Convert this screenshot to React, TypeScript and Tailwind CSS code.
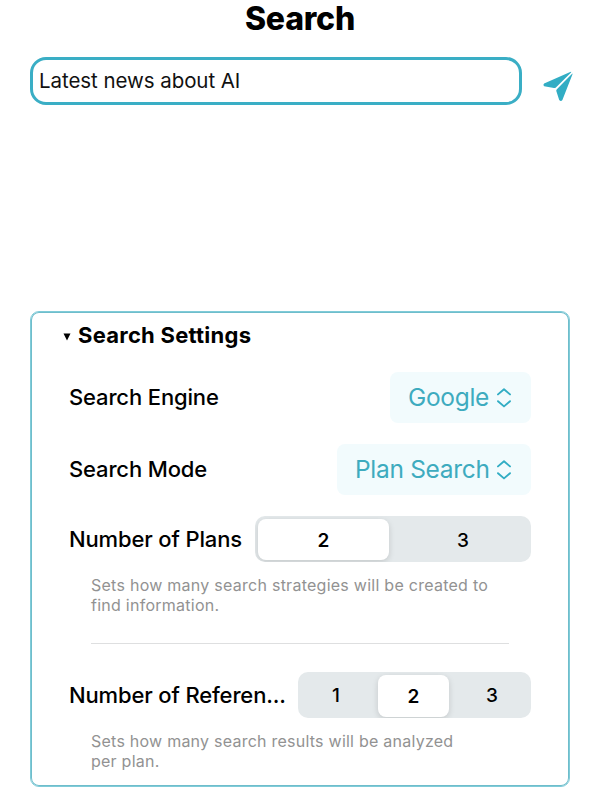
import type { ReactNode } from 'react';

function Updown() {
  return (
    <svg width="16" height="20" viewBox="0 0 16 20" fill="none" stroke="#32adc4" strokeWidth="1.9" strokeLinecap="round" strokeLinejoin="round">
      <path d="M2 6.4 8 1.2 14 6.4M2 13.2 8 18.4 14 13.2" />
    </svg>
  );
}

function Select({ children, width }: { children: ReactNode; width: string }) {
  return (
    <button className={`flex h-[51px] ${width} items-center justify-between rounded-lg bg-[#f2fbfd] pr-[19px] pl-[18px] text-[24.5px] tracking-[-0.3px] text-[#3eabbf]`}>
      <span className="whitespace-nowrap">{children}</span>
      <Updown />
    </button>
  );
}

function Label({ children }: { children: ReactNode }) {
  return <span className="text-[22px] leading-7 font-medium tracking-[-0.14px] whitespace-nowrap text-black">{children}</span>;
}

export default function App() {
  return (
    <main className="h-[790px] w-[600px] overflow-hidden bg-white font-['Inter',sans-serif] text-black">
      <h1 className="h-[57px] pt-px text-center text-[32px] leading-9 font-extrabold tracking-[-0.2px]">Search</h1>
      <div className="flex h-12 pl-[30px]">
        <div className="w-[492px] rounded-[16px] border-[3px] border-[#3aaec5] pt-[7px] pl-[6px] text-[20.5px] leading-7 tracking-[-0.06px] text-[#111]">Latest news about AI</div>
        <svg className="mt-[13px] ml-[20px]" width="32" height="34" viewBox="0 0 32 34" fill="#32adc4">
          <path d="M2.1 13.4 28.2 2Q30 1.2 28.8 2.8L13.9 17.4Q13 18.2 11.9 18L2.2 16.2Q.5 15 2.1 13.4Z" />
          <path d="M15.1 18.9 29.6 4.3Q31 2.8 30.4 4.6L20.4 29.9Q18.9 32.2 17.2 29.9L14.3 21Q14 19.9 15.1 18.9Z" />
        </svg>
      </div>
      <section className="mt-[206px] ml-[30px] h-[476px] w-[540px] rounded-[9px] border border-[#7fcbd8] p-px shadow-[inset_0_0_0_1px_#6fbdcb]">
        <div className="flex h-[59px] items-start pt-[8px] pl-[31px]">
          <svg className="mt-[12px] mr-[7px]" width="8" height="8" viewBox="0 0 8 8">
            <path d="M.5.5h7L4 7.5Z" />
          </svg>
          <h2 className="text-[22px] leading-7 font-bold tracking-[0.25px] whitespace-nowrap">Search Settings</h2>
        </div>
        <div className="mr-[37px] ml-[37px]">
          <div className="flex h-[51px] items-center justify-between">
            <div className="pb-[2px]"><Label>Search Engine</Label></div>
            <Select width="w-[141px]">Google</Select>
          </div>
          <div className="mt-[21px] flex h-[51px] items-center justify-between">
            <div className="pb-[2px]"><Label>Search Mode</Label></div>
            <Select width="w-[194px]">Plan Search</Select>
          </div>
          <div className="mt-[21px] flex h-[46px] items-center justify-between">
            <Label>Number of Plans</Label>
            <div className="flex h-[46px] w-[276px] items-center overflow-hidden rounded-[10px] bg-[#e4e9eb] pt-[3px] pr-[3px] pb-[2px] pl-[3px] text-[19px] font-medium">
              <div className="flex h-[41px] w-[131px] items-center justify-center rounded-[8px] bg-white pt-[3px] font-semibold shadow-[0_2px_6px_rgba(0,0,0,0.14)]">2</div>
              <div className="flex-1 pt-[3px] pl-[9px] text-center">3</div>
            </div>
          </div>
          <p className="mt-[14px] ml-[22px] text-[16px] leading-[19.5px] tracking-[0.26px] whitespace-nowrap text-[#929292]">
            Sets how many search strategies will be created to<br />find information.
          </p>
          <hr className="mt-[28px] mr-[22px] ml-[22px] border-t border-[#dedfe0]" />
          <div className="mt-[28px] flex h-[46px] items-center justify-between">
            <Label>Number of Referen...</Label>
            <div className="flex h-[46px] w-[233px] items-center overflow-hidden rounded-[10px] bg-[#e4e9eb] text-[19px] font-medium">
              <div className="w-[80px] pt-[3px] pr-[4px] text-center">1</div>
              <div className="mt-px flex h-[42px] w-[71px] items-center justify-center rounded-[8px] bg-white pt-[3px] font-semibold shadow-[0_2px_6px_rgba(0,0,0,0.14)]">2</div>
              <div className="flex-1 pt-[3px] pl-[4px] text-center">3</div>
            </div>
          </div>
          <p className="mt-[14px] ml-[22px] text-[16px] leading-[19.5px] tracking-[0.24px] whitespace-nowrap text-[#929292]">
            Sets how many search results will be analyzed<br />per plan.
          </p>
        </div>
      </section>
    </main>
  );
}
